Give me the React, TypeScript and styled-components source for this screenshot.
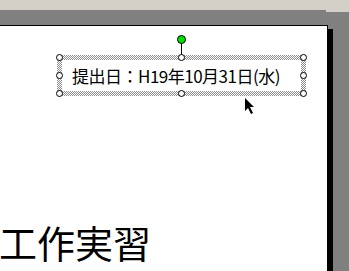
import * as React from 'react'
import styled, { createGlobalStyle } from 'styled-components'

const GlobalStyle = createGlobalStyle`
  html, body {
    margin: 0;
    padding: 0;
    overflow: hidden;
  }
  body {
    font-family: "Noto Sans CJK JP", "Liberation Sans", sans-serif;
  }
`

const Window = styled.div`
  width: 349px;
  height: 271px;
  background: #808080;
  display: flex;
  flex-direction: column;
  overflow: hidden;
`

const ToolbarEdge = styled.div`
  height: 10px;
  flex: none;
  background: #d4d0c8;
  position: relative;
  &::after {
    content: '';
    position: absolute;
    left: 326px;
    right: 0;
    top: 10px;
    height: 2px;
    background: #d4d0c8;
  }
`

const Workspace = styled.div`
  flex: 1;
  padding-top: 15px;
  display: flex;
`

const Slide = styled.div`
  width: 327px;
  height: 300px;
  flex: none;
  background: #fff;
  border-top: 1px solid #000;
  border-right: 1px solid #000;
  box-shadow: 5px 4px 0 #000;
  position: relative;
  display: flex;
  flex-direction: column;
  align-items: flex-start;
`

const Frame = styled.div`
  position: relative;
  margin: 29px 0 0 57px;
  width: 249px;
  height: 41px;
  box-sizing: border-box;
  padding: 5px;
  background: repeating-conic-gradient(#8c8c8c 0 25%, #fff 0 50%) 0 0 / 2px 2px;
`

const FrameInner = styled.div`
  height: 100%;
  background: #fff;
  display: flex;
  align-items: center;
  padding-left: 10px;
  box-sizing: border-box;
`

const DateText = styled.span`
  font-size: 17px;
  letter-spacing: -0.5px;
  line-height: 1;
  color: #000;
  white-space: nowrap;
`

const Handle = styled.span<{ $x: number; $y: number }>`
  position: absolute;
  left: ${(p) => p.$x}px;
  top: ${(p) => p.$y}px;
  width: 7px;
  height: 7px;
  box-sizing: border-box;
  border: 1px solid #000;
  border-radius: 50%;
  background: #fff;
`

const RotateStem = styled.span`
  position: absolute;
  left: 124px;
  top: -12px;
  width: 1px;
  height: 12px;
  background: #000;
`

const RotateHandle = styled.span`
  position: absolute;
  left: 120px;
  top: -20px;
  width: 9px;
  height: 9px;
  box-sizing: border-box;
  border: 1px solid #000;
  border-radius: 50%;
  background: #00e000;
`

const Title = styled.div`
  margin: 127px 0 0 -1px;
  font-size: 38px;
  line-height: 1;
  color: #000;
  white-space: nowrap;
`

const Cursor = styled.svg`
  position: absolute;
  left: 245px;
  top: 72px;
`

const handles: Array<[number, number]> = [
  [-1, -1], [121, -1], [243, -1],
  [-1, 17], [243, 17],
  [-1, 35], [121, 35], [243, 35],
]

export default function App() {
  return (
    <Window>
      <GlobalStyle />
      <ToolbarEdge />
      <Workspace>
        <Slide>
          <Frame>
            <FrameInner>
              <DateText>提出日：H19年10月31日(水)</DateText>
            </FrameInner>
            <RotateStem />
            <RotateHandle />
            {handles.map(([x, y], i) => (
              <Handle key={i} $x={x} $y={y} />
            ))}
          </Frame>
          <Title>工作実習</Title>
          <Cursor width="12" height="18" viewBox="0 0 12 18">
            <path d="M0 0 L0 13 L3 10 L6 16 L8 15 L5 9 L9 9 Z" fill="#000" />
          </Cursor>
        </Slide>
      </Workspace>
    </Window>
  )
}
